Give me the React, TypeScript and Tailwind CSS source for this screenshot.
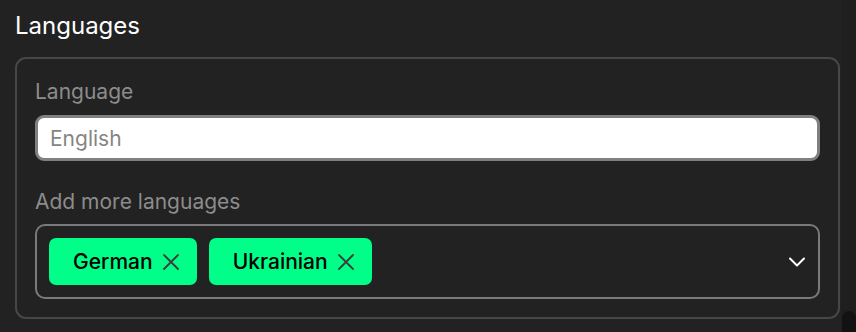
import { ChevronDown } from "lucide-react";

const chips = ["German", "Ukrainian"];

function Chip({ label }: { label: string }) {
  return (
    <div className="flex h-[47px] items-center gap-[10px] rounded-[7px] bg-[#00ff88] pl-[24px] pr-[18px]">
      <span className="text-[21px] font-medium leading-none text-black">{label}</span>
      <svg width="16" height="16" viewBox="0 0 16 16" className="text-[#3d3d3d]">
        <path d="M1 1L15 15M15 1L1 15" stroke="currentColor" strokeWidth="1.8" strokeLinecap="round" />
      </svg>
    </div>
  );
}

export default function App() {
  return (
    <div className="flex h-[332px] w-[856px] bg-[#222222] font-['Inter',sans-serif]">
      <div className="flex-1 pl-[15px] pt-[10px]">
        <h2 className="text-[24px] font-normal leading-[32px] text-white">Languages</h2>

        <div className="mt-[15px] w-[825px] rounded-[11px] border-2 border-[#474747] px-[18px] pb-[18px] pt-[19px]">
          <div className="text-[21px] leading-[28px] text-[#8c8c8c]">Language</div>
          <div className="mt-[9px] flex h-[46px] items-center rounded-[9px] border-[3px] border-[#808080] bg-white pl-[12px]">
            <span className="text-[21px] leading-none text-[#858585]">English</span>
          </div>

          <div className="mt-[27px] text-[21px] leading-[28px] text-[#8c8c8c]">Add more languages</div>
          <div className="mt-[8px] flex h-[75px] items-center justify-between rounded-[10px] border-2 border-[#7a7a7a] pl-[12px] pr-[7px]">
            <div className="flex gap-[12px]">
              {chips.map((c) => (
                <Chip key={c} label={c} />
              ))}
            </div>
            <ChevronDown className="h-[28px] w-[28px] text-white" strokeWidth={1.7} />
          </div>
        </div>
      </div>

      <div className="flex w-[15px] flex-col justify-end bg-[#1f1f1f]">
        <div className="ml-[1px] h-[21px] rounded-t-[7px] bg-[#121212]" />
      </div>
    </div>
  );
}
